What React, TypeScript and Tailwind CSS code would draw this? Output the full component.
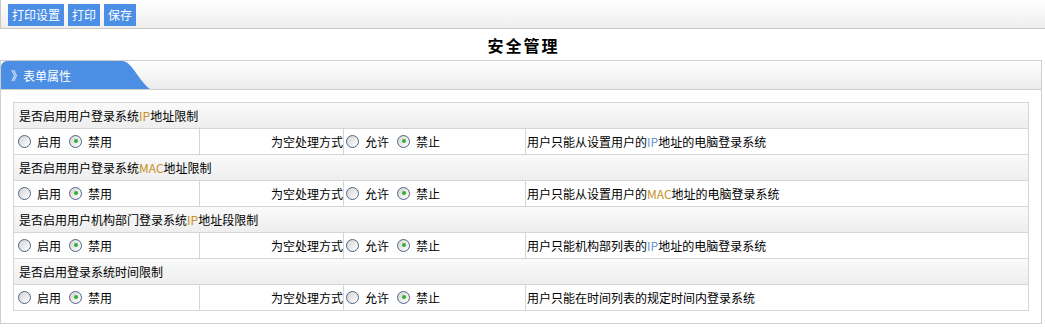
import React from "react";

type Rule = {
  title: React.ReactNode;
  desc: React.ReactNode;
};

const hl = (t: string) => <span className="text-[#c8901e]">{t}</span>;
const hlb = (t: string) => <span className="text-[#6a9ad6]">{t}</span>;

const rules: Rule[] = [
  {
    title: <>是否启用用户登录系统{hl("IP")}地址限制</>,
    desc: <>用户只能从设置用户的{hlb("IP")}地址的电脑登录系统</>,
  },
  {
    title: <>是否启用用户登录系统{hl("MAC")}地址限制</>,
    desc: <>用户只能从设置用户的{hl("MAC")}地址的电脑登录系统</>,
  },
  {
    title: <>是否启用用户机构部门登录系统{hl("IP")}地址段限制</>,
    desc: <>用户只能机构部列表的{hlb("IP")}地址的电脑登录系统</>,
  },
  {
    title: <>是否启用登录系统时间限制</>,
    desc: <>用户只能在时间列表的规定时间内登录系统</>,
  },
];

function Radio({ checked, label }: { checked?: boolean; label: string }) {
  return (
    <span className="inline-flex items-center">
      <span className="relative mr-[6px] h-[13px] w-[13px] rounded-full border border-[#4e6585] bg-gradient-to-br from-[#d4d4d4] to-white">
        {checked && (
          <span className="absolute left-[3.5px] top-[3.5px] h-[4px] w-[4px] rounded-full bg-[#2fb02f]" />
        )}
      </span>
      <span className="mt-[2px]">{label}</span>
    </span>
  );
}

function ToolButton({ children }: { children: React.ReactNode }) {
  return (
    <button
      type="button"
      className="h-[22px] bg-[#4a8ee6] px-[4px] text-[12px] leading-[22px] text-white"
    >
      {children}
    </button>
  );
}

export default function App() {
  return (
    <div
      className="h-[328px] w-[1045px] bg-white text-[12px] text-black"
      style={{ fontFamily: '"Noto Sans CJK SC", "Liberation Sans", sans-serif' }}
    >
      {/* toolbar */}
      <div className="flex h-[29px] items-start gap-[4px] border-b border-l border-[#c8c8c8] bg-gradient-to-b from-white to-[#eeeeee] pl-[7px] pt-[4px]">
        <ToolButton>打印设置</ToolButton>
        <ToolButton>打印</ToolButton>
        <ToolButton>保存</ToolButton>
      </div>

      <h1 className="flex h-[31px] items-center justify-center pl-[2px] text-[16px] font-bold tracking-[2px]">
        安全管理
      </h1>

      {/* panel */}
      <div className="mr-[3px] h-[264px] border border-[#cfcfcf]">
        <div className="flex h-[29px] border-b border-[#cfcfcf] bg-gradient-to-b from-white to-[#ececec]">
          <div className="relative h-full w-[150px] overflow-hidden">
            <div className="absolute left-0 top-0 h-full w-[122px] rounded-tl-[6px] bg-[#4c8ee4]" />
            <svg className="absolute left-[118px] top-0" width="32" height="29" viewBox="0 0 32 29">
              <path d="M0 0 H4 C14 2 18 18 32 29 H0 Z" fill="#4c8ee4" />
            </svg>
            <span className="absolute left-[10px] top-[6px] text-white">》表单属性</span>
          </div>
        </div>

        <div className="px-[12px] pt-[12px]">
          <table className="w-full border-collapse border border-[#d6d6d6]">
            <colgroup>
              <col className="w-[186px]" />
              <col className="w-[144px]" />
              <col className="w-[182px]" />
              <col />
            </colgroup>
            <tbody>
              {rules.map((r, i) => (
                <React.Fragment key={i}>
                  <tr className="h-[26px] bg-gradient-to-b from-[#fafafa] to-[#ededed]">
                    <td colSpan={4} className="border border-[#d6d6d6] px-[5px]">
                      {r.title}
                    </td>
                  </tr>
                  <tr className="h-[26px]">
                    <td className="border border-[#d6d6d6] pl-[4px]">
                      <span className="inline-flex gap-[8px]">
                        <Radio label="启用" />
                        <Radio checked label="禁用" />
                      </span>
                    </td>
                    <td className="border border-[#d6d6d6] text-right">为空处理方式</td>
                    <td className="border border-[#d6d6d6] pl-[2px]">
                      <span className="inline-flex gap-[8px]">
                        <Radio label="允许" />
                        <Radio checked label="禁止" />
                      </span>
                    </td>
                    <td className="border border-[#d6d6d6] pl-[1px]">{r.desc}</td>
                  </tr>
                </React.Fragment>
              ))}
            </tbody>
          </table>
        </div>
      </div>
    </div>
  );
}
